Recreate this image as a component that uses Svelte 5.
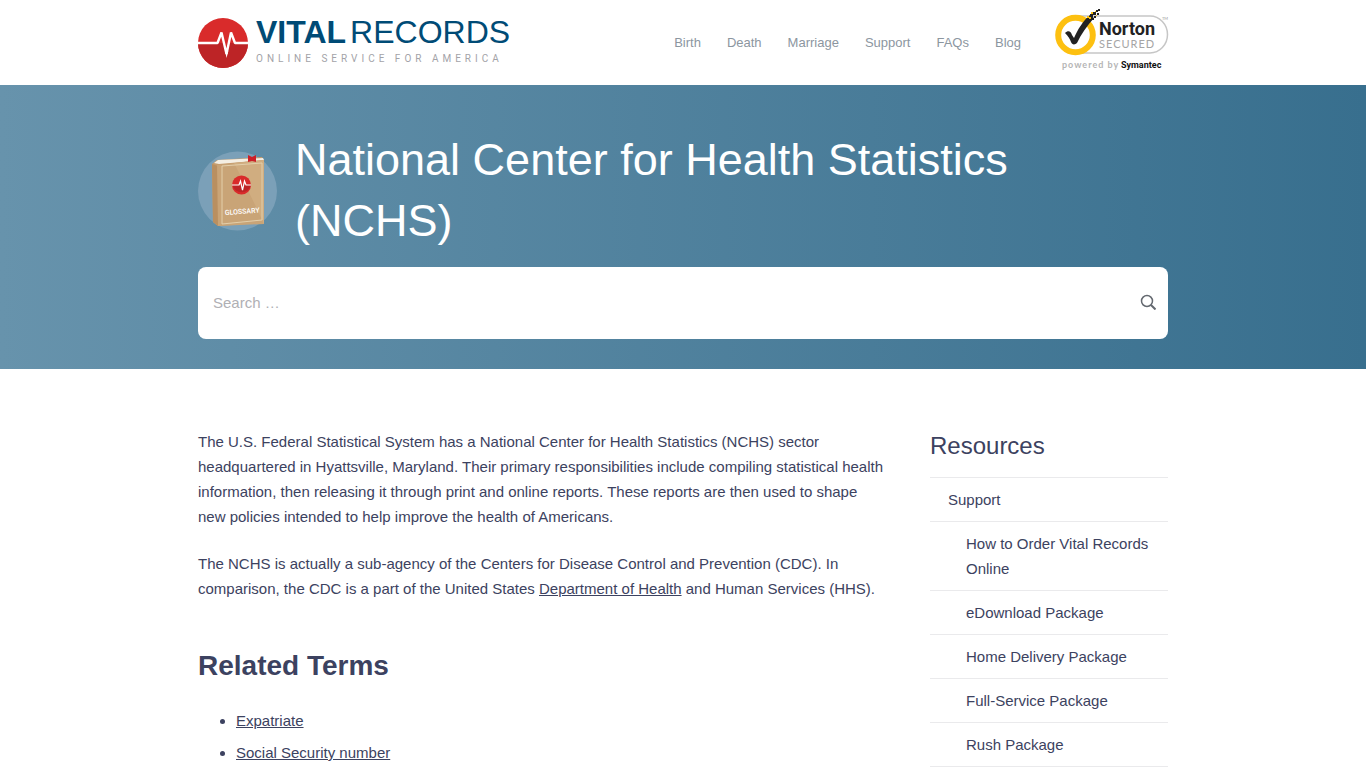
<script>
  const nav = ['Birth', 'Death', 'Marriage', 'Support', 'FAQs', 'Blog'];
  const resources = [
    'How to Order Vital Records Online',
    'eDownload Package',
    'Home Delivery Package',
    'Full-Service Package',
    'Rush Package'
  ];
  const terms = ['Expatriate', 'Social Security number'];
  let query = $state('');
</script>

<header class="wrap top">
  <a class="logo" href="#home" aria-label="Vital Records, online service for America">
    <svg width="50" height="50" viewBox="0 0 50 50" aria-hidden="true">
      <circle cx="25" cy="25" r="25" fill="#d92b2b" />
      <path d="M0 25H50A25 25 0 0 1 0 25Z" fill="#bd2426" />
      <path d="M23.500 14L29 33 33 15 37 25H29Z" fill="#d92b2b" />
      <path d="M0 25H19.500L23.500 14.500 28.500 36 33 14.500 37 25H50" fill="none" stroke="#fff" stroke-width="2.400" stroke-linejoin="bevel" />
      <path d="M27 33L28.600 40 30.200 33Z" fill="#fff" />
    </svg>
    <span class="words">
      <span class="name"><b>VITAL</b><span>RECORDS</span></span>
      <span class="tag">ONLINE SERVICE FOR AMERICA</span>
    </span>
  </a>
  <nav aria-label="Main">
    {#each nav as item}
      <a href="#{item}">{item}</a>
    {/each}
  </nav>
  <a class="seal" href="#norton" aria-label="Norton Secured, powered by Symantec">
    <svg width="116" height="64" viewBox="0 0 116 64">
      <path d="M24 8H96A17.500 18.500 0 0 1 96 45H24" fill="#fff" stroke="#c6c6c6" stroke-width="1.500" />
      <circle cx="21.500" cy="27" r="17.300" fill="#fff" stroke="#fdc010" stroke-width="6" />
      <path d="M11 25C14 22 17 23 18 27L20 30C24 21 29 13 36 7L40 10C33 18 27 26 23 35C21 37 18 37 17 34C16 31 14 28 11 25Z" fill="#222" />
      <path d="M36 6h3v3h-3zM39 4h3v3h-3zM42 2h2v2h-2zM40 8h2v2h-2zM43 5h2v2h-2zM44 1h2v2h-2zM38 10h2v2h-2z" fill="#222" />
      <path d="M37 4h2v2h-2zM42 7h1v1h-1zM35 9h2v2h-2zM41 3h1v1h-1zM33 8h2v2h-2z" fill="#fdc010" />
      <text x="45" y="27" class="brand">Norton</text>
      <text x="45" y="40" class="secured">SECURED</text>
      <text x="108" y="12" class="tm">TM</text>
      <text x="8" y="60" class="powered">powered by</text>
      <text x="67" y="60" class="symantec">Symantec</text>
    </svg>
  </a>
</header>

<section class="hero">
  <div class="wrap">
    <div class="title">
      <svg width="80" height="80" viewBox="0 0 80 80" aria-hidden="true">
        <circle cx="39.500" cy="40" r="39.500" fill="#7ba0b8" />
        <path d="M14 13L19 9 64 6 66 9 65 72 20 75 15 71Z" fill="#c59c6d" />
        <path d="M16 12L20 9 65 7 66 9 21 13Z" fill="#f4eee3" />
        <path d="M14 13L20 15V75L15 71Z" fill="#b98f60" />
        <path d="M19 14L66 9V73L20 75Z" fill="#c9a477" />
        <path d="M36 12L66 9V73Q53 44 36 12Z" fill="#d0ad80" />
        <path d="M24 15L64 12V69L24 73Z" fill="none" stroke="#e3cfab" stroke-width="1" />
        <path d="M50 4L54 6 58 4V11L54 10 50 11Z" fill="#cc2028" />
        <circle cx="43.500" cy="34" r="9.500" fill="#d92b2b" />
        <path d="M34.500 34H53A9.500 9.500 0 0 1 34.500 34Z" fill="#bd2426" />
        <path d="M34 34H41L42.500 30 44.500 39 46.500 30 48 34H53" fill="none" stroke="#fff" stroke-width="1.200" />
        <text x="27" y="64" transform="rotate(-4 27 64)" class="glossary">GLOSSARY</text>
      </svg>
      <h1>National Center for Health Statistics (NCHS)</h1>
    </div>
    <form class="search" role="search" onsubmit={(e) => e.preventDefault()}>
      <input type="search" aria-label="Search" placeholder="Search …" bind:value={query} />
      <button type="submit" aria-label="Submit search">
        <svg width="16" height="16" viewBox="0 0 16 16" fill="none" stroke="#646970" stroke-width="1.500">
          <circle cx="7" cy="7" r="5.500" />
          <path d="M11 11L15.500 15.500" stroke-width="2" />
        </svg>
      </button>
    </form>
  </div>
</section>

<div class="wrap body">
  <main>
    <p>
      The U.S. Federal Statistical System has a National Center for Health Statistics (NCHS) sector
      headquartered in Hyattsville, Maryland. Their primary responsibilities include compiling statistical
      health information, then releasing it through print and online reports. These reports are then used to
      shape new policies intended to help improve the health of Americans.
    </p>
    <p>
      The NCHS is actually a sub-agency of the Centers for Disease Control and Prevention (CDC). In
      comparison, the CDC is a part of the United States <a href="#hhs">Department of Health</a> and Human
      Services (HHS).
    </p>
    <h2>Related Terms</h2>
    <ul>
      {#each terms as term}
        <li><a href="#{term}">{term}</a></li>
      {/each}
    </ul>
  </main>
  <aside>
    <h3>Resources</h3>
    <ul>
      <li>
        <a href="#support">Support</a>
        <ul>
          {#each resources as item}
            <li><a href="#{item}">{item}</a></li>
          {/each}
        </ul>
      </li>
    </ul>
  </aside>
</div>

<style>
  :global(body) {
    margin: 0;
    background: #fff;
    color: #3c4260;
    font: 15px/25px 'Liberation Sans', Arial, sans-serif;
  }
  .wrap {
    box-sizing: border-box;
    max-width: 1010px;
    margin: 0 auto;
    padding: 0 20px;
  }
  a {
    color: inherit;
  }
  .top {
    display: flex;
    align-items: center;
    min-height: 85px;
  }
  .logo {
    display: flex;
    align-items: center;
    gap: 8px;
    color: #004b76;
    text-decoration: none;
  }
  .words {
    display: flex;
    flex-direction: column;
  }
  .name {
    display: flex;
    gap: 4px;
    font-size: 32px;
    line-height: 32px;
  }
  .tag {
    color: #a3a3a8;
    font-family: Roboto, sans-serif;
    font-size: 10px;
    line-height: 22px;
    letter-spacing: 4px;
  }
  nav {
    display: flex;
    gap: 26px;
    margin-left: auto;
  }
  nav a {
    color: #8c969f;
    font-size: 13px;
    text-decoration: none;
  }
  .seal {
    display: flex;
    margin: 0 -2px 5px 33px;
  }
  .brand {
    font: 700 18px Roboto, sans-serif;
    fill: #222;
  }
  .secured {
    font: 11px Lato, sans-serif;
    letter-spacing: 1px;
    fill: #a5a5a5;
  }
  .tm {
    font: 4px Lato, sans-serif;
    fill: #999;
  }
  .powered {
    font: 700 9px Lato, sans-serif;
    letter-spacing: 1px;
    fill: #b5b5b5;
  }
  .symantec {
    font: 700 9px Roboto, sans-serif;
    fill: #111;
  }
  .glossary {
    font: 500 7px Roboto, sans-serif;
    fill: #fff;
  }
  .hero {
    padding: 44px 0 30px;
    background: linear-gradient(90deg, #6793ac, #386f8e);
  }
  .title {
    display: flex;
    align-items: center;
    gap: 17px;
  }
  .title svg {
    flex: none;
    margin-top: 2px;
  }
  h1 {
    margin: 0;
    color: #fff;
    font-size: 45px;
    font-weight: 400;
    line-height: 61px;
  }
  .search {
    display: flex;
    margin-top: 16px;
    overflow: hidden;
    border-radius: 8px;
    background: #fff;
  }
  .search input {
    flex: 1;
    min-width: 0;
    height: 72px;
    box-sizing: border-box;
    padding: 0 15px 2px;
    border: 0;
    background: none;
    color: #3c4260;
    font: inherit;
    outline: 0;
  }
  .search input::placeholder {
    color: #b0b0b4;
  }
  .search button {
    display: flex;
    align-items: center;
    padding: 0 12px 2px;
    border: 0;
    background: none;
    cursor: pointer;
  }
  .body {
    display: grid;
    grid-template-columns: minmax(0, 1fr) 238px;
    gap: 44px;
    padding-top: 60px;
  }
  main p {
    margin: 0 0 22px;
  }
  h2 {
    margin: 47px 0 21px;
    font-size: 28px;
    line-height: 36px;
  }
  main ul {
    margin: 0;
    padding-left: 38px;
  }
  main li {
    padding: 3px 0 4px;
  }
  h3 {
    margin: 0 0 14px;
    font-size: 24px;
    font-weight: 400;
    line-height: 34px;
  }
  aside ul {
    margin: 0;
    padding: 0;
    list-style: none;
  }
  aside a {
    display: block;
    padding: 9px 18px;
    border-bottom: 1px solid #eaeaec;
    text-decoration: none;
  }
  aside > ul {
    border-top: 1px solid #eaeaec;
  }
  aside ul ul a {
    padding: 9px 0 9px 36px;
  }
</style>
